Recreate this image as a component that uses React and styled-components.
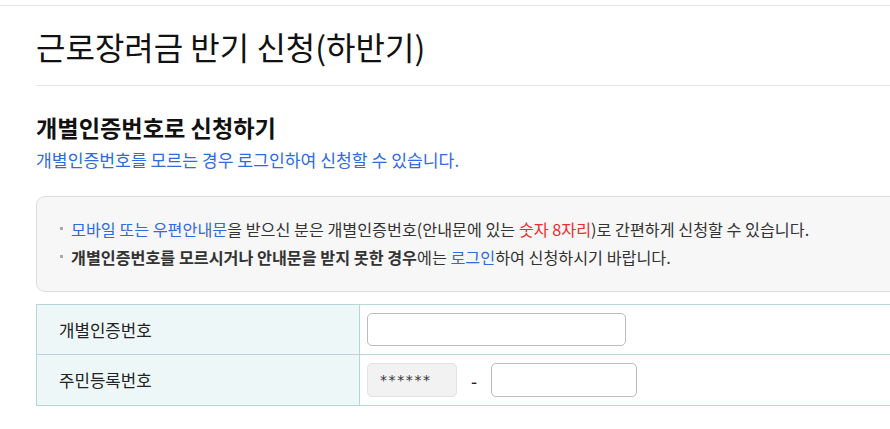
import React from "react";
import styled, { createGlobalStyle } from "styled-components";

const GlobalStyle = createGlobalStyle`
  html, body {
    margin: 0;
    padding: 0;
    background: #fff;
    overflow: hidden;
  }
  body {
    font-family: "Noto Sans CJK KR", "Noto Sans", sans-serif;
    color: #222;
  }
`;

const TopBar = styled.div`
  height: 5px;
  border-bottom: 1px solid #e6e6e6;
  width: 1300px;
`;

const Page = styled.main`
  width: 1200px;
  padding-left: 36px;
  display: flex;
  flex-direction: column;
`;

const Title = styled.h1`
  margin: 0;
  height: 79px;
  display: flex;
  align-items: center;
  font-size: 32px;
  font-weight: 400;
  color: #111;
  border-bottom: 1px solid #e5e5e5;
`;

const SubTitle = styled.h2`
  margin: 26px 0 0;
  font-size: 23.2px;
  line-height: 30px;
  font-weight: 700;
  color: #111;
`;

const Lead = styled.p`
  margin: 7px 0 0;
  font-size: 17.2px;
  line-height: 22px;
  color: #2f6be0;
`;

const NoticeBox = styled.div`
  margin-top: 25px;
  background: #f7f7f7;
  border: 1px solid #dcdcdc;
  border-radius: 9px;
  padding: 18px 0 20px 23px;
`;

const NoticeList = styled.ul`
  margin: 0;
  padding: 0;
  list-style: none;
`;

const NoticeItem = styled.li`
  display: flex;
  align-items: center;
  gap: 8px;
  font-size: 16.2px;
  line-height: 28px;
  color: #333;
  white-space: nowrap;
  &::before {
    content: "";
    width: 3px;
    height: 3px;
    background: #a9a9a9;
    flex: none;
    margin-top: -2px;
  }
`;

const Em = styled.span`
  color: ${(p) => (p.$tone === "red" ? "#ea2d2d" : p.$tone === "blue" ? "#2f6be0" : "inherit")};
  font-weight: ${(p) => (p.$bold ? 700 : "inherit")};
`;

const FormTable = styled.div`
  margin-top: 12px;
  display: grid;
  grid-template-columns: 323px 1fr;
  border-top: 1px solid #b7d6d9;
  border-left: 1px solid #b7d6d9;
`;

const LabelCell = styled.div`
  background: #eef7f7;
  border-right: 1px solid #b7d6d9;
  border-bottom: 1px solid #b7d6d9;
  height: ${(p) => p.$h}px;
  display: flex;
  align-items: center;
  padding-left: 22px;
  font-size: 16.8px;
  color: #222;
`;

const FieldCell = styled.div`
  border-bottom: 1px solid #b7d6d9;
  height: ${(p) => p.$h}px;
  display: flex;
  align-items: center;
  padding-left: 7px;
`;

const TextInput = styled.input`
  box-sizing: border-box;
  width: ${(p) => p.$w}px;
  height: ${(p) => p.$hh}px;
  border: 1px solid #bdbdbd;
  border-radius: 5px;
  background: #fff;
  padding: 0 10px;
  font-size: 15px;
  outline: none;
`;

const Masked = styled.div`
  box-sizing: border-box;
  width: 90px;
  height: 34px;
  border: 1px solid #e2e2e2;
  border-radius: 5px;
  background: #f2f2f2;
  display: flex;
  align-items: center;
  padding-left: 12px;
  font-family: "DejaVu Sans", sans-serif;
  font-size: 14px;
  letter-spacing: 1.6px;
  color: #333;
`;

const Dash = styled.span`
  width: 34px;
  text-align: center;
  font-size: 17px;
  font-weight: 500;
  color: #222;
`;

export default function App() {
  return (
    <>
      <GlobalStyle />
      <TopBar />
      <Page>
        <Title>근로장려금 반기 신청(하반기)</Title>
        <SubTitle>개별인증번호로 신청하기</SubTitle>
        <Lead>개별인증번호를 모르는 경우 로그인하여 신청할 수 있습니다.</Lead>
        <NoticeBox>
          <NoticeList>
            <NoticeItem>
              <span>
                <Em $tone="blue">모바일 또는 우편안내문</Em>을 받으신 분은 개별인증번호(안내문에 있는{" "}
                <Em $tone="red">숫자 8자리</Em>)로 간편하게 신청할 수 있습니다.
              </span>
            </NoticeItem>
            <NoticeItem>
              <span>
                <Em $bold>개별인증번호를 모르시거나 안내문을 받지 못한 경우</Em>에는{" "}
                <Em $tone="blue">로그인</Em>하여 신청하시기 바랍니다.
              </span>
            </NoticeItem>
          </NoticeList>
        </NoticeBox>
        <FormTable>
          <LabelCell $h={49}>개별인증번호</LabelCell>
          <FieldCell $h={49}>
            <TextInput $w={259} $hh={33} aria-label="개별인증번호" />
          </FieldCell>
          <LabelCell $h={50}>주민등록번호</LabelCell>
          <FieldCell $h={50}>
            <Masked>******</Masked>
            <Dash>-</Dash>
            <TextInput $w={146} $hh={34} aria-label="주민등록번호 뒷자리" />
          </FieldCell>
        </FormTable>
      </Page>
    </>
  );
}
